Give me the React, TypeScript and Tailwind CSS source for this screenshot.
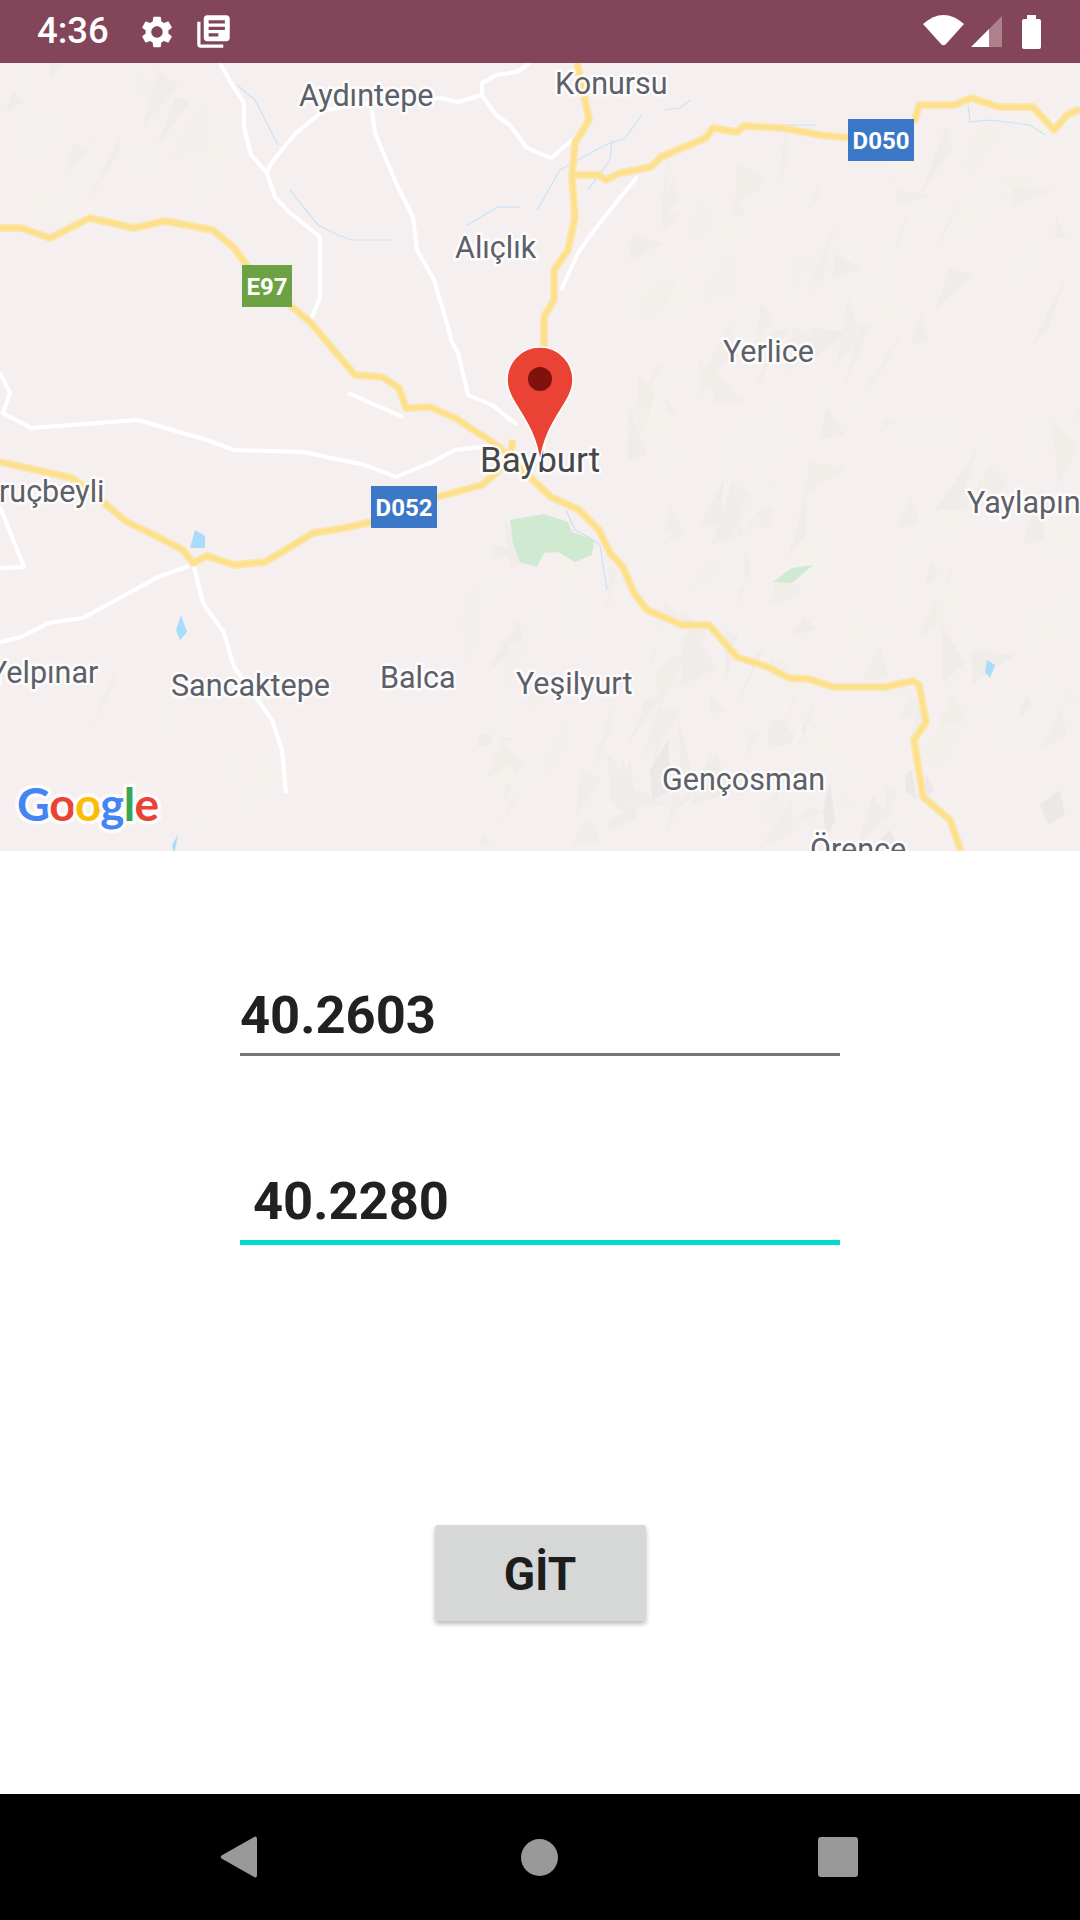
import { MdLibraryBooks, MdSettings } from 'react-icons/md'

const font = { fontFamily: 'Roboto, sans-serif' }

// Map traces, in page coordinates (svg viewBox starts at y=63)
const yellowRoads = [
  '0,228 21,228 50,238 90,218 134,228 165,221 213,230 234,248 248,267 292,307 310,322 355,375 382,377 399,388 406,408 430,407 455,418 489,440 505,452',
  '577,63 585,100 589,120 575,143 572,177 575,217 568,250 554,270 554,300 544,317 544,350',
  '572,175 599,175 606,180 620,173 651,167 661,157 706,138 713,128 737,132 744,126 782,128 820,135 851,138',
  '914,123 919,105 954,105 971,98 999,107 1033,107 1054,130 1067,115 1080,109',
  '0,462 72,478 103,502 127,522 148,532 183,550 193,563 207,556 234,565 265,562 282,552 313,533 344,528 372,522',
  '437,497 482,485 496,473 510,457 513,440',
  '505,452 530,477 551,497 579,510 599,530 610,553 623,567 634,593 647,610 682,625 709,625 737,657 768,667 789,678 809,679 833,687 885,687 913,681 919,685 926,722 914,740 923,797 950,820 961,851',
]

const whiteRoads = [
  '220,63 231,83 244,103 244,127 251,155 267,173 275,197 289,212 320,237 320,297 310,322',
  '267,173 272,162 296,133 324,110 372,103 441,98 458,102 482,95 482,83 496,75 517,72 530,63',
  '482,95 496,115 510,125 527,148 551,158 572,140',
  '372,110 375,133 396,183 413,217 417,250 434,280 448,327 451,340 458,353 468,395 492,405 517,425',
  '637,177 610,210 592,233 578,253 561,290',
  '348,393 403,417',
  '0,373 10,393 3,413 31,428 138,420 165,428 207,440 234,450 303,452 365,465 396,477 430,463 455,450 482,447',
  '0,507 24,567 0,568',
  '189,566 158,577 83,618 48,623 21,637 0,642',
  '194,567 203,603 224,633 234,667 258,700 272,720 282,750 286,793',
]

const waterLines = [
  '237,85 255,100 268,125 278,145',
  '290,190 318,225 338,235 352,240 392,240',
  '467,225 498,207 520,207',
  '537,210 560,170 605,145 625,138 642,115',
  '588,190 610,160 612,140',
  '665,110 680,108 690,100',
  '780,125 815,125',
  '968,105 970,122 990,120 1030,125 1045,135',
  '566,510 575,530 590,538 600,545 607,590',
  '645,605 652,616',
]

const waterSpots = [
  '195,530 205,536 205,548 190,548',
  '181,615 187,632 180,640 176,630',
  '172,845 178,835 174,855',
  '987,660 995,665 990,678 985,672',
]

function buildTerrain() {
  let seed = 41
  const rnd = () => {
    seed = (seed * 16807) % 2147483647
    return seed / 2147483647
  }
  const zones = [
    { x: 620, y: 170, w: 460, h: 680, n: 190 },
    { x: 450, y: 540, w: 360, h: 310, n: 80 },
    { x: 0, y: 63, w: 220, h: 190, n: 20 },
    { x: 80, y: 690, w: 200, h: 160, n: 6 },
  ]
  const fills = ['#f4f1ec', '#f3f0eb', '#f5f2ee', '#f1eeea', '#f4f0ee', '#efece9']
  const shards: { points: string; fill: string }[] = []
  zones.forEach((z) => {
    for (let i = 0; i < z.n; i++) {
      const x = z.x + rnd() * z.w
      const y = z.y + rnd() * z.h
      const len = 14 + rnd() * 60
      const wid = 10 + rnd() * 34
      const dx = -0.1 + rnd() * 0.8
      const points = [
        `${x.toFixed(0)},${y.toFixed(0)}`,
        `${(x + len * dx).toFixed(0)},${(y - len).toFixed(0)}`,
        `${(x + wid).toFixed(0)},${(y - len * rnd()).toFixed(0)}`,
      ].join(' ')
      shards.push({ points, fill: fills[Math.floor(rnd() * fills.length)] })
    }
  })
  return shards
}

const terrain = buildTerrain()
const darkShards = [
  '905,775 912,770 917,800 906,792',
  '926,775 935,790 922,800',
  '823,810 830,780 835,820 826,840',
  '880,840 890,830 900,850',
  '1040,805 1060,790 1065,815 1048,825',
  '650,770 668,740 672,790 652,800',
]

const labels = [
  { t: 'Aydıntepe', x: 299, y: 106 },
  { t: 'Konursu', x: 555, y: 94 },
  { t: 'Alıçlık', x: 455, y: 258 },
  { t: 'Yerlice', x: 723, y: 362 },
  { t: 'ruçbeyli', x: -1, y: 502 },
  { t: 'Yaylapınar', x: 967, y: 513 },
  { t: 'Yelpınar', x: -11, y: 683 },
  { t: 'Sancaktepe', x: 171, y: 696 },
  { t: 'Balca', x: 380, y: 688 },
  { t: 'Yeşilyurt', x: 516, y: 694 },
  { t: 'Gençosman', x: 662, y: 790 },
  { t: 'Örence', x: 810, y: 860 },
]

const shields = [
  { t: 'E97', x: 242, y: 265, w: 50, fill: '#6ca243' },
  { t: 'D050', x: 848, y: 119, w: 66, fill: '#3b78c8' },
  { t: 'D052', x: 371, y: 486, w: 66, fill: '#3b78c8' },
]

function MapView() {
  return (
    <svg viewBox="0 63 1080 788" className="block h-[788px] w-full shrink-0 bg-[#f6eff0]" style={font}>
      {terrain.map((s, i) => (
        <polygon key={i} points={s.points} fill={s.fill} />
      ))}
      {darkShards.map((p) => (
        <polygon key={p} points={p} fill="#ebe8e8" />
      ))}

      <polygon points="510,520 544,514 568,522 572,532 594,540 592,555 575,562 558,552 544,553 537,567 520,562 513,543" fill="#cfead0" />
      <polygon points="813,565 792,568 773,582 792,583" fill="#cfead0" />

      {waterLines.map((p) => (
        <polyline key={p} points={p} fill="none" stroke="#c4e3f8" strokeWidth="1.2" />
      ))}
      {waterSpots.map((p) => (
        <polygon key={p} points={p} fill="#a9dbfb" />
      ))}

      {whiteRoads.map((p) => (
        <polyline key={p} points={p} fill="none" stroke="#ffffff" strokeWidth="4" strokeLinejoin="round" />
      ))}
      {yellowRoads.map((p) => (
        <polyline key={p} points={p} fill="none" stroke="#fbe6ae" strokeWidth="8" strokeLinejoin="round" />
      ))}
      {yellowRoads.map((p) => (
        <polyline key={p + 'c'} points={p} fill="none" stroke="#fde08c" strokeWidth="4.5" strokeLinejoin="round" />
      ))}

      {shields.map((s) => (
        <g key={s.t}>
          <rect x={s.x} y={s.y} width={s.w} height="42" fill={s.fill} />
          <text x={s.x + s.w / 2} y={s.y + 30} textAnchor="middle" fontSize="24" fontWeight="700" fill="#ffffff">
            {s.t}
          </text>
        </g>
      ))}

      {labels.map((l) => (
        <text
          key={l.t}
          x={l.x}
          y={l.y}
          fontSize="30.500"
          fill="#5d6068"
          stroke="#ffffff"
          strokeWidth="5"
          strokeOpacity="0.85"
          strokeLinejoin="round"
          paintOrder="stroke"
        >
          {l.t}
        </text>
      ))}
      <text x="480" y="472" fontSize="35" fill="#45474b" stroke="#ffffff" strokeWidth="5" strokeOpacity="0.85" strokeLinejoin="round" paintOrder="stroke">
        Bayburt
      </text>

      {/* marker */}
      <path
        d="M540 347 C520 347 507 363 507 380 C507 403 534 418 540 462 C546 418 573 403 573 380 C573 363 560 347 540 347 Z"
        fill="#ea4335"
        stroke="#ffffff"
        strokeWidth="1.5"
      />
      <circle cx="540" cy="379" r="12" fill="#7f120c" />

      {/* Google mark */}
      <text
        x="17"
        y="821"
        fontSize="46"
        fontWeight="700"
        fontFamily="Lato, sans-serif"
        stroke="#ffffff"
        strokeWidth="7"
        strokeOpacity="0.8"
        strokeLinejoin="round"
        paintOrder="stroke"
        textLength="142"
      >
        <tspan fill="#4285f4">G</tspan>
        <tspan fill="#ea4335">o</tspan>
        <tspan fill="#fbbc05">o</tspan>
        <tspan fill="#4285f4">g</tspan>
        <tspan fill="#34a853">l</tspan>
        <tspan fill="#ea4335">e</tspan>
      </text>
    </svg>
  )
}

function StatusBar() {
  return (
    <div className="flex h-[63px] shrink-0 items-center bg-[#824559] pl-[37px] pr-[39px] text-white">
      <span className="text-[36.500px] font-medium leading-none" style={font}>
        4:36
      </span>
      <MdSettings size={38} className="ml-[29px]" />
      <MdLibraryBooks size={39} className="ml-[18px]" />
      <div className="flex-1" />
      {/* wifi */}
      <svg width="42" height="34" viewBox="0 0 42 34" className="mb-[3px]">
        <path d="M0 11 Q20.5 -7 41 11 L23 31 Q20.5 33.500 18 31 Z" fill="#ffffff" />
      </svg>
      {/* signal */}
      <svg width="31" height="31" viewBox="0 0 31 31" className="ml-[6px]">
        <polygon points="31,0 31,31 18,31 18,13" fill="#ad808c" />
        <polygon points="18,13 18,31 0,31" fill="#ffffff" />
      </svg>
      {/* battery */}
      <svg width="19" height="34" viewBox="0 0 19 34" className="ml-[20px]">
        <path d="M5 0 H14 V4 H17 Q19 4 19 6 V32 Q19 34 17 34 H2 Q0 34 0 32 V6 Q0 4 2 4 H5 Z" fill="#ffffff" />
      </svg>
    </div>
  )
}

function NavBar() {
  return (
    <div className="flex h-[126px] shrink-0 items-center bg-black">
      <svg width="37" height="42" viewBox="0 0 37 42" className="ml-[220px]">
        <path d="M35 0.500 Q37 0 37 3 V39 Q37 42 35 41.500 L1.500 22.500 Q0 21 1.500 19.500 Z" fill="#999999" />
      </svg>
      <div className="ml-[264px] h-[37px] w-[37px] rounded-full bg-[#999999]" />
      <div className="ml-[260px] h-[40px] w-[40px] rounded-[3px] bg-[#999999]" />
    </div>
  )
}

export default function App() {
  return (
    <div className="flex h-[1920px] w-[1080px] flex-col overflow-hidden bg-white" style={font}>
      <StatusBar />
      <MapView />

      <div className="flex flex-1 flex-col items-center">
        <div className="mt-[132px] h-[73px] w-[600px] border-b-[3px] border-[#757575] text-[52.500px] font-bold leading-[64px] text-[#212121]">
          40.2603
        </div>
        <div className="mt-[113px] h-[76px] w-[600px] border-b-[5px] border-[#00dccb] pl-[13px] text-[52.500px] font-bold leading-[64px] text-[#212121]">
          40.2280
        </div>
        <button className="mt-[280px] flex h-[96px] w-[211px] items-center justify-center rounded-[3px] bg-[#d6d7d7] pt-[2px] text-[46px] font-bold text-[#1d1d1d] shadow-[0_3px_5px_rgba(0,0,0,0.28)]">
          GİT
        </button>
      </div>

      <NavBar />
    </div>
  )
}
